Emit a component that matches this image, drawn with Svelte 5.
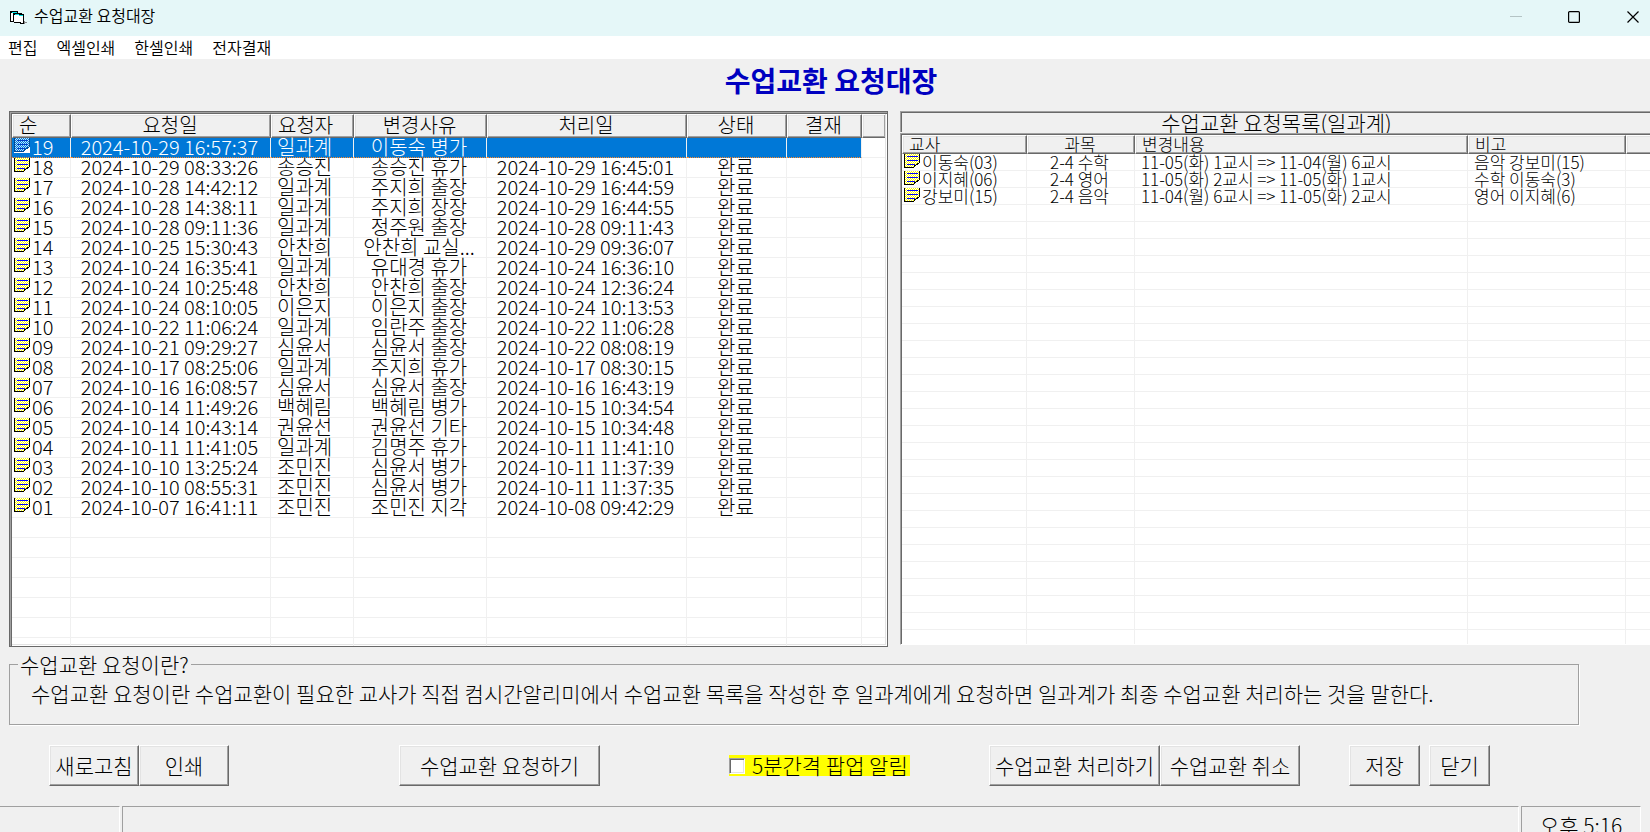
<script lang="ts">
	type Column = { label: string; key: string; kind: string };
	type Row = Record<string, string>;

	const menu = ['편집', '엑셀인쇄', '한셀인쇄', '전자결재'];

	const ledgerColumns: Column[] = [
		{ label: '순', key: 'no', kind: 'no' },
		{ label: '요청일', key: 'requested', kind: 'date' },
		{ label: '요청자', key: 'requester', kind: 'person' },
		{ label: '변경사유', key: 'reason', kind: 'reason' },
		{ label: '처리일', key: 'processed', kind: 'date' },
		{ label: '상태', key: 'status', kind: 'status' },
		{ label: '결재', key: 'approval', kind: 'approval' },
		{ label: '', key: 'rest', kind: 'rest' }
	];

	const ledger: Row[] = [
		['19', '2024-10-29 16:57:37', '일과계', '이동숙 병가', '', ''],
		['18', '2024-10-29 08:33:26', '송승진', '송승진 휴가', '2024-10-29 16:45:01', '완료'],
		['17', '2024-10-28 14:42:12', '일과계', '주지희 출장', '2024-10-29 16:44:59', '완료'],
		['16', '2024-10-28 14:38:11', '일과계', '주지희 장장', '2024-10-29 16:44:55', '완료'],
		['15', '2024-10-28 09:11:36', '일과계', '정주원 출장', '2024-10-28 09:11:43', '완료'],
		['14', '2024-10-25 15:30:43', '안찬희', '안찬희 교실...', '2024-10-29 09:36:07', '완료'],
		['13', '2024-10-24 16:35:41', '일과계', '유대경 휴가', '2024-10-24 16:36:10', '완료'],
		['12', '2024-10-24 10:25:48', '안찬희', '안찬희 출장', '2024-10-24 12:36:24', '완료'],
		['11', '2024-10-24 08:10:05', '이은지', '이은지 출장', '2024-10-24 10:13:53', '완료'],
		['10', '2024-10-22 11:06:24', '일과계', '임란주 출장', '2024-10-22 11:06:28', '완료'],
		['09', '2024-10-21 09:29:27', '심윤서', '심윤서 출장', '2024-10-22 08:08:19', '완료'],
		['08', '2024-10-17 08:25:06', '일과계', '주지희 휴가', '2024-10-17 08:30:15', '완료'],
		['07', '2024-10-16 16:08:57', '심윤서', '심윤서 출장', '2024-10-16 16:43:19', '완료'],
		['06', '2024-10-14 11:49:26', '백혜림', '백혜림 병가', '2024-10-15 10:34:54', '완료'],
		['05', '2024-10-14 10:43:14', '권윤선', '권윤선 기타', '2024-10-15 10:34:48', '완료'],
		['04', '2024-10-11 11:41:05', '일과계', '김명주 휴가', '2024-10-11 11:41:10', '완료'],
		['03', '2024-10-10 13:25:24', '조민진', '심윤서 병가', '2024-10-11 11:37:39', '완료'],
		['02', '2024-10-10 08:55:31', '조민진', '심윤서 병가', '2024-10-11 11:37:35', '완료'],
		['01', '2024-10-07 16:41:11', '조민진', '조민진 지각', '2024-10-08 09:42:29', '완료']
	].map(([no, requested, requester, reason, processed, status]) => ({
		no,
		requested,
		requester,
		reason,
		processed,
		status
	}));

	const detailColumns: Column[] = [
		{ label: '교사', key: 'teacher', kind: 'teacher' },
		{ label: '과목', key: 'subject', kind: 'subject' },
		{ label: '변경내용', key: 'change', kind: 'change' },
		{ label: '비고', key: 'note', kind: 'note' },
		{ label: '', key: 'rest', kind: 'rest' }
	];

	const details: Row[] = [
		{ teacher: '이동숙(03)', subject: '2-4 수학', change: '11-05(화) 1교시 => 11-04(월) 6교시', note: '음악 강보미(15)' },
		{ teacher: '이지혜(06)', subject: '2-4 영어', change: '11-05(화) 2교시 => 11-05(화) 1교시', note: '수학 이동숙(3)' },
		{ teacher: '강보미(15)', subject: '2-4 음악', change: '11-04(월) 6교시 => 11-05(화) 2교시', note: '영어 이지혜(6)' }
	];

	// blank ruled lines below the data, clipped by the list box
	const blankRows = Array.from({ length: 60 });

	let selected = $state('19');
	let popupAlarm = $state(false);
</script>

{#snippet note(active: boolean)}
	<svg class="sheet" width="16" height="15" viewBox="0 0 16 15" shape-rendering="crispEdges" aria-hidden="true">
		<defs>
			<pattern id={active ? 'dither-blue' : 'dither-yellow'} width="2" height="2" patternUnits="userSpaceOnUse">
				<path d="M0 0h2v2h-2z" fill={active ? '#0078d7' : '#ffff00'} />
				<path d="M0 0h1v1h-1zM1 1h1v1h-1z" fill={active ? '#b8e0ff' : '#ffffff'} />
			</pattern>
		</defs>
		{#if active}
			<path d="M0 0h16v15h-16z" fill="#fff" />
		{/if}
		<path d="M1 0h14v9h-1v1h-2v2h-2v1h-9z" fill="url(#{active ? 'dither-blue' : 'dither-yellow'})" />
		<path d="M3 2h11v1h-11zM3 6h11v1h-11zM3 10h8v1h-8z" fill={active ? '#003cc8' : '#0000ff'} />
		<path
			d="M0 0h1v13h9v1h-10zM15 0h1v9h-1zM13 9h2v1h-2zM12 10h2v1h-2zM10 11h2v1h-2zM10 12h1v1h-1z"
			fill={active ? '#004a94' : '#000000'}
		/>
	</svg>
{/snippet}

<div class="window">
	<header class="titlebar">
		<svg class="app-icon" width="17" height="14" viewBox="0 0 17 14" shape-rendering="crispEdges" aria-hidden="true">
			<path d="M0 0h8v2h4v1h2v10h-4v-1h-6v-1h-4z" fill="#000" />
			<path d="M1 2h2v8h-2zM4 4h6v1h3v7h-2v-1h-7z" fill="#fff" />
			<path d="M2 1h5v1h-5zM5 3h4v1h-4zM9 4h4v1h-4z" fill="#00e5e5" />
			<path d="M14 10h1v1h2v1h-2v1h-1z" fill="#888" />
		</svg>
		<span class="caption">수업교환 요청대장</span>
		<div class="window-controls">
			<button aria-label="최소화" disabled>
				<svg width="12" height="12" viewBox="0 0 12 12"><path d="M0 5.5h12" stroke="#b4c4c5" /></svg>
			</button>
			<button aria-label="최대화">
				<svg width="12" height="12" viewBox="0 0 12 12">
					<rect x="0.6" y="0.6" width="10.8" height="10.8" rx="1" fill="none" stroke="#000" stroke-width="1.2" />
				</svg>
			</button>
			<button aria-label="창 닫기">
				<svg width="12" height="12" viewBox="0 0 12 12">
					<path d="M0.5 0.5l11 11M11.5 0.5l-11 11" stroke="#000" stroke-width="1.2" />
				</svg>
			</button>
		</div>
	</header>

	<nav class="menubar">
		{#each menu as item}
			<button>{item}</button>
		{/each}
	</nav>

	<main>
		<h1>수업교환 요청대장</h1>

		<div class="lists">
			<div class="ledger">
				<table>
					<colgroup>
						{#each ledgerColumns as column}
							<col class={column.kind} />
						{/each}
					</colgroup>
					<thead>
						<tr>
							{#each ledgerColumns as column}
								<th class={column.kind}>{column.label}</th>
							{/each}
						</tr>
					</thead>
					<tbody>
						{#each ledger as row}
							<tr class:selected={row.no === selected} onclick={() => (selected = row.no)}>
								{#each ledgerColumns as column}
									<td class={column.kind}>
										{#if column.key === 'no'}
											<div class="with-note">
												{@render note(row.no === selected)}
												<span>{row.no}</span>
											</div>
										{:else}
											{row[column.key] ?? ''}
										{/if}
									</td>
								{/each}
							</tr>
						{/each}
						{#each blankRows as _}
							<tr aria-hidden="true">
								{#each ledgerColumns as column}
									<td class={column.kind}></td>
								{/each}
							</tr>
						{/each}
					</tbody>
				</table>
			</div>

			<section class="detail">
				<h2>수업교환 요청목록(일과계)</h2>
				<div class="detail-list">
					<table>
						<colgroup>
							{#each detailColumns as column}
								<col class={column.kind} />
							{/each}
						</colgroup>
						<thead>
							<tr>
								{#each detailColumns as column}
									<th class={column.kind}>{column.label}</th>
								{/each}
							</tr>
						</thead>
						<tbody>
							{#each details as row}
								<tr>
									{#each detailColumns as column}
										<td class={column.kind}>
											{#if column.key === 'teacher'}
												<div class="with-note">
													{@render note(false)}
													<span>{row.teacher}</span>
												</div>
											{:else}
												{row[column.key] ?? ''}
											{/if}
										</td>
									{/each}
								</tr>
							{/each}
							{#each blankRows as _}
								<tr aria-hidden="true">
									{#each detailColumns as column}
										<td class={column.kind}></td>
									{/each}
								</tr>
							{/each}
						</tbody>
					</table>
				</div>
			</section>
		</div>

		<fieldset>
			<legend>수업교환 요청이란?</legend>
			<p>
				수업교환 요청이란 수업교환이 필요한 교사가 직접 컴시간알리미에서 수업교환 목록을 작성한 후 일과계에게 요청하면 일과계가 최종 수업교환 처리하는 것을 말한다.
			</p>
		</fieldset>

		<div class="actions">
			<div class="group">
				<button class="tool">새로고침</button>
				<button class="tool">인쇄</button>
			</div>
			<button class="request">수업교환 요청하기</button>
			<label>
				<input type="checkbox" bind:checked={popupAlarm} />
				<span>5분간격 팝업 알림</span>
			</label>
			<div class="group">
				<button class="process">수업교환 처리하기</button>
				<button class="cancel">수업교환 취소</button>
			</div>
			<div class="group end">
				<button class="save">저장</button>
				<button class="close">닫기</button>
			</div>
		</div>
	</main>

	<footer class="statusbar">
		<div class="panel first"></div>
		<div class="panel message"></div>
		<div class="panel clock">오후 5:16</div>
	</footer>
</div>

<style>
	:global(body) {
		margin: 0;
	}

	.window {
		display: flex;
		flex-direction: column;
		height: 100vh;
		overflow: hidden;
		background: #f0f0f0;
		color: #000;
		font-family: 'Noto Sans CJK KR', sans-serif;
		font-size: 21px;
		font-weight: 300;
	}

	button {
		font: inherit;
		color: inherit;
	}

	.titlebar {
		display: flex;
		align-items: center;
		flex: none;
		height: 36px;
		padding-left: 10px;
		background: #e5f7f8;
		font-size: 16px;
		font-weight: 350;
	}

	.caption {
		margin-left: 7px;
		line-height: 30px;
		padding-bottom: 6px;
	}

	.window-controls {
		display: flex;
		align-self: stretch;
		margin-left: auto;
	}

	.window-controls button {
		display: flex;
		align-items: center;
		justify-content: center;
		width: 58px;
		padding: 0 0 2px;
		border: 0;
		background: none;
	}

	.window-controls button:last-child {
		width: 34px;
		margin-left: 13px;
	}

	.menubar {
		display: flex;
		flex: none;
		gap: 19px;
		height: 23px;
		padding-left: 8px;
		background: #fff;
	}

	.menubar button {
		padding: 0;
		border: 0;
		background: none;
		font-size: 16px;
		font-weight: 350;
		line-height: 23px;
	}

	main {
		display: flex;
		flex: 1;
		flex-direction: column;
		min-height: 0;
	}

	h1 {
		flex: none;
		margin: 0;
		padding: 1px 0 11px 12px;
		color: #0000c0;
		font-size: 28px;
		font-weight: 700;
		line-height: 40px;
		text-align: center;
	}

	.lists {
		display: flex;
		flex: 1;
		gap: 12px;
		min-height: 0;
		padding-left: 9px;
	}

	.ledger {
		flex: none;
		box-sizing: border-box;
		width: 879px;
		overflow: hidden;
		border: 1px solid #696969;
		background: #fff;
		box-shadow: inset 1px 1px #a0a0a0, inset 2px 2px #696969, inset -1px -1px #fff, inset -2px -2px #e3e3e3;
		padding: 2px;
		font-size: 20px;
	}

	table {
		width: 100%;
		table-layout: fixed;
		border-collapse: separate;
		border-spacing: 0;
	}

	th,
	td {
		box-sizing: border-box;
		padding: 0 2px 0 0;
		text-align: center;
		vertical-align: top;
		white-space: nowrap;
	}

	th {
		border: 1px solid;
		border-color: #fff #696969 #696969 #fff;
		background: #f0f0f0;
		box-shadow: inset -1px -1px #a0a0a0, inset 1px 1px #e3e3e3;
		font-weight: 300;
	}

	td {
		border-right: 1px solid #f0f0f0;
		border-bottom: 1px solid #f0f0f0;
	}

	th.rest,
	td.rest {
		border-right: 0;
	}

	.ledger th {
		height: 24px;
		line-height: 20px;
	}

	.ledger td {
		height: 20px;
		line-height: 17px;
	}

	col.no {
		width: 59px;
	}

	col.date {
		width: 200px;
	}

	col.person {
		width: 83px;
	}

	col.reason {
		width: 133px;
	}

	col.status {
		width: 100px;
	}

	col.approval {
		width: 75px;
	}

	th.no,
	.person,
	.teacher,
	.change,
	.note {
		padding-left: 6px;
		text-align: left;
	}

	td.no,
	td.teacher {
		padding: 0;
	}

	.with-note {
		display: flex;
		align-items: flex-start;
		gap: 2px;
		padding-left: 2px;
	}

	.sheet {
		flex: none;
	}

	tr.selected td:not(.rest) {
		border-bottom: 1px dotted #ff8728;
		background: #0078d7;
		color: #fff;
	}

	.detail {
		display: flex;
		flex: 1;
		flex-direction: column;
		min-width: 0;
		margin-right: -6px;
		padding-bottom: 2px;
	}

	h2 {
		flex: none;
		margin: 0 0 1px;
		padding-right: 4px;
		border-top: 1px solid #a0a0a0;
		border-left: 1px solid #a0a0a0;
		box-shadow: inset 1px 1px #696969;
		font-size: 21px;
		font-weight: 300;
		line-height: 20px;
		text-align: center;
	}

	.detail-list {
		flex: 1;
		min-height: 0;
		overflow: hidden;
		padding: 1px 0 0 1px;
		border-top: 1px solid #a0a0a0;
		border-left: 1px solid #a0a0a0;
		border-bottom: 1px solid #fff;
		background: #fff;
		box-shadow: inset 1px 1px #696969;
		font-size: 17px;
	}

	.detail th {
		height: 19px;
		line-height: 16px;
	}

	.detail td {
		height: 17px;
		line-height: 16px;
	}

	col.teacher {
		width: 125px;
	}

	col.subject {
		width: 108px;
	}

	col.change {
		width: 333px;
	}

	col.note {
		width: 158px;
	}

	fieldset {
		flex: none;
		min-width: 0;
		margin: 5px 71px 0 9px;
		padding: 1px 21px 15px;
		border: 1px solid #a0a0a0;
		box-shadow: 1px 1px #fff;
	}

	legend {
		margin-left: -13px;
		padding: 0 2px;
		line-height: 24px;
	}

	p {
		margin: 0;
		line-height: 32px;
		white-space: nowrap;
	}

	.actions {
		display: flex;
		flex: none;
		align-items: center;
		padding: 20px 0 20px 49px;
	}

	.group {
		display: flex;
	}

	.actions button {
		height: 41px;
		padding: 0 0 2px;
		border: 1px solid;
		border-color: #fff #696969 #696969 #fff;
		background: #f0f0f0;
		box-shadow: inset -1px -1px #a0a0a0, inset 1px 1px #e3e3e3;
		white-space: nowrap;
	}

	.tool {
		width: 90px;
	}

	.request {
		width: 201px;
		margin-left: 170px;
	}

	label {
		display: flex;
		align-items: center;
		box-sizing: border-box;
		width: 181px;
		margin: 0 79px 0 129px;
		background: #ff0;
		line-height: 21px;
		white-space: nowrap;
	}

	input {
		flex: none;
		appearance: none;
		width: 16px;
		height: 16px;
		margin: 0 7px 0 0;
		border: 1px solid;
		border-color: #a0a0a0 #fff #fff #a0a0a0;
		background: #fff;
		box-shadow: inset 1px 1px #696969, inset -1px -1px #e3e3e3;
	}

	input:checked {
		background: #000;
	}

	.process {
		width: 171px;
	}

	.cancel {
		width: 140px;
	}

	.end {
		gap: 9px;
		margin-left: 49px;
	}

	.save {
		width: 71px;
	}

	.close {
		width: 61px;
	}

	.statusbar {
		display: flex;
		flex: none;
		gap: 2px;
		height: 26px;
		padding-right: 9px;
	}

	.panel {
		box-sizing: border-box;
		border-top: 1px solid #a0a0a0;
		border-left: 1px solid #a0a0a0;
		border-right: 1px solid #fff;
	}

	.first {
		width: 120px;
		border-left: 0;
	}

	.message {
		flex: 1;
	}

	.clock {
		width: 120px;
		line-height: 36px;
		text-align: center;
	}
</style>
